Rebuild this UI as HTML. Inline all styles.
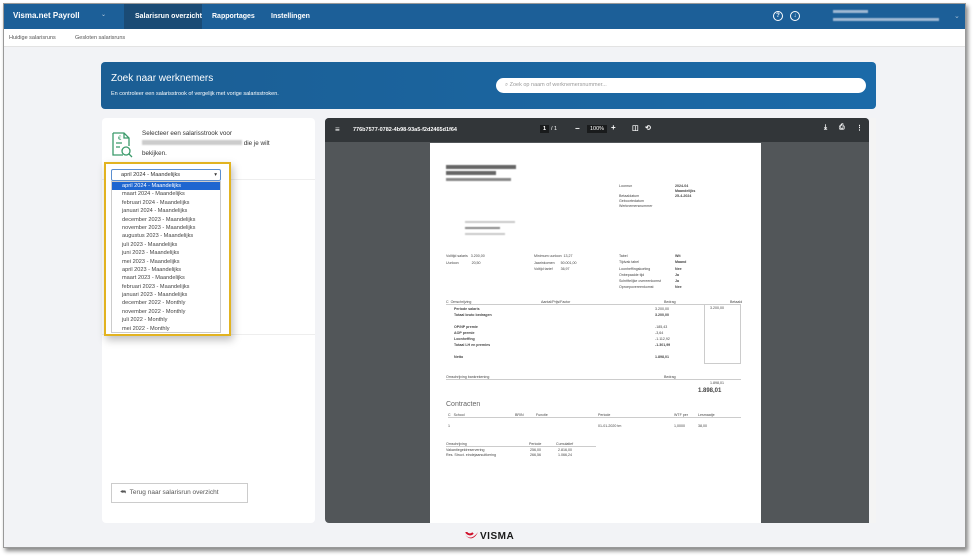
<!DOCTYPE html>
<html><head><meta charset="utf-8"><style>
*{box-sizing:border-box;margin:0;padding:0}
body{width:976px;height:556px;background:#fff;font-family:"Liberation Sans",sans-serif;position:relative;overflow:hidden}
.frame{position:absolute;left:3px;top:3px;width:963px;height:545px;background:#f2f3f6;border:1px solid #999;box-shadow:2px 3px 4px #888;overflow:hidden}
.nav{position:absolute;left:0;top:0;width:100%;height:25px;background:#1c5f98;color:#fff;font-size:7px;font-weight:bold}
.nav span{position:absolute;top:9px}
.sub{position:absolute;left:0;top:25px;width:100%;height:18px;background:#fff;font-size:5.5px;color:#555;border-bottom:1px solid #e3e3e3}
.abs{position:absolute}
.blur{background:#c9c9c9;height:4px;position:absolute;filter:blur(.6px)}
.dl div{height:8.4px;line-height:8.4px;padding-left:10px;font-size:5.6px;color:#444;white-space:nowrap}
.pt{position:absolute;font-size:3.6px;color:#444;white-space:nowrap}
</style></head><body>
<div class="frame">
 <div class="nav">
  <span style="left:9px;top:7px;font-size:8px">Visma.net Payroll</span>
  <span style="left:97px;top:7px;font-weight:normal;font-size:6px;opacity:.7">⌄</span>
  <div class="abs" style="left:120px;top:0;width:78px;height:25px;background:#1a4b75"></div>
  <span style="left:131px">Salarisrun overzicht</span>
  <span style="left:208px">Rapportages</span>
  <span style="left:267px">Instellingen</span>
  <div class="abs" style="left:769px;top:7px;width:10px;height:10px;border:1px solid #fff;border-radius:50%;font-size:6px;text-align:center;line-height:8px">?</div>
  <div class="abs" style="left:786px;top:7px;width:10px;height:10px;border:1px solid #fff;border-radius:50%;font-size:6px;text-align:center;line-height:8px">↓</div>
  <div class="blur" style="left:829px;top:6px;width:35px;height:3px;background:#9fb8d3"></div>
  <div class="blur" style="left:829px;top:14px;width:106px;height:3px;background:#9fb8d3"></div>
  <span style="left:950px;top:8px;font-weight:normal;opacity:.6">⌄</span>
 </div>
 <div class="sub"><span class="abs" style="left:5px;top:6px">Huidige salarisruns</span><span class="abs" style="left:71px;top:6px">Gesloten salarisruns</span></div>
 <div class="abs" style="left:97px;top:58px;width:775px;height:47px;background:linear-gradient(90deg,#1b5e94,#1b6aa8);border-radius:4px;color:#fff">
  <div class="abs" style="left:10px;top:11px;font-size:10px">Zoek naar werknemers</div>
  <div class="abs" style="left:10px;top:29px;font-size:5.5px">En controleer een salarisstrook of vergelijk met vorige salarisstroken.</div>
  <div class="abs" style="left:395px;top:16px;width:370px;height:15px;background:#fff;border-radius:8px;color:#999;font-size:5.5px;line-height:15px;padding-left:9px">⌕ Zoek op naam of werknemersnummer...</div>
 </div>
 <div class="abs" style="left:98px;top:114px;width:213px;height:405px;background:#fff;border-radius:4px">
  <svg class="abs" style="left:8px;top:13px" width="24" height="28" viewBox="0 0 24 28" fill="none" stroke="#3a9a6a" stroke-width="1.3"><path d="M3 2h11l5 5v8M3 2v22h10M14 2v5h5"/><circle cx="16" cy="20" r="4"/><path d="M19 23l3 3M6 12h6M6 16h4"/><text x="8" y="9" font-size="6" fill="#3a9a6a" stroke="none">€</text></svg>
  <div class="abs" style="left:40px;top:11px;font-size:6.3px;color:#333;line-height:10px;width:170px">Selecteer een salarisstrook voor<br><span style="display:inline-block;width:100px;height:5px;background:#ccc;filter:blur(.7px)"></span> die je wilt<br>bekijken.</div>
  <div class="abs" style="left:15px;top:77px;width:96px;height:12px;border:1px solid #bbb"></div>
  <div class="abs" style="left:15px;top:103px;width:111px;height:20px;border:1px solid #ccc;font-size:6.5px;line-height:18px;padding-left:86px;color:#444">risstrook</div>
  <div class="abs" style="left:15px;top:130px;width:101px;height:20px;border:1px solid #ccc;font-size:6.5px;line-height:18px;padding-left:80px;color:#444">nken</div>
  <div class="abs" style="left:15px;top:157px;width:71px;height:20px;border:1px solid #ccc"></div>
  <div class="abs" style="left:0;top:61px;width:213px;border-top:1px solid #eee"></div>
  <div class="abs" style="left:0;top:216px;width:213px;border-top:1px solid #eee"></div>
  <div class="abs" style="left:9px;top:365px;width:137px;height:20px;border:1px solid #ccc;font-size:6.5px;color:#555;line-height:18px;padding-left:8px">⮪ &nbsp;Terug naar salarisrun overzicht</div>
 </div>
 <div class="abs" style="left:100px;top:158px;width:127px;height:174px;border:2px solid #e2b320;background:#fff;box-shadow:2px 4px 8px rgba(0,0,0,.25)">
  <div class="abs" style="left:5px;top:5px;width:110px;height:12px;border:1px solid #5b8fd0;border-radius:2px;font-size:5.6px;line-height:10px;padding-left:9px;color:#333">april 2024 - Maandelijks<span class="abs" style="right:3px;top:0">▾</span></div>
  <div class="abs dl" style="left:5px;top:17px;width:110px;height:152px;border:1px solid #ccc;overflow:hidden">
   <div style="background:#1e66d0;color:#fff">april 2024 - Maandelijks</div><div>maart 2024 - Maandelijks</div><div>februari 2024 - Maandelijks</div><div>januari 2024 - Maandelijks</div><div>december 2023 - Maandelijks</div><div>november 2023 - Maandelijks</div><div>augustus 2023 - Maandelijks</div><div>juli 2023 - Maandelijks</div><div>juni 2023 - Maandelijks</div><div>mei 2023 - Maandelijks</div><div>april 2023 - Maandelijks</div><div>maart 2023 - Maandelijks</div><div>februari 2023 - Maandelijks</div><div>januari 2023 - Maandelijks</div><div>december 2022 - Monthly</div><div>november 2022 - Monthly</div><div>juli 2022 - Monthly</div><div>mei 2022 - Monthly</div>
  </div>
 </div>
 <div class="abs" style="left:321px;top:114px;width:544px;height:405px;background:#525659;border-radius:4px 4px 0 4px;overflow:hidden">
  <div class="abs" style="left:0;top:0;width:544px;height:24px;background:#323639;color:#fff;font-size:5.5px;font-weight:bold">
   <span class="abs" style="left:10px;top:7px;font-size:8px;font-weight:normal">≡</span>
   <span class="abs" style="left:28px;top:9px">776b7577-0782-4b98-93a5-f2d2465d1f64</span>
   <span class="abs" style="left:215px;top:7px;background:#191b1c;padding:1px 3px">1</span><span class="abs" style="left:226px;top:8px;font-weight:normal">/ 1</span>
   <span class="abs" style="left:250px;top:6px;font-size:8px">−</span>
   <span class="abs" style="left:262px;top:7px;background:#191b1c;padding:1px 3px;font-weight:normal">100%</span>
   <span class="abs" style="left:286px;top:5px;font-size:8px">+</span>
   <span class="abs" style="left:307px;top:6px;font-size:7px">◫</span><span class="abs" style="left:320px;top:6px;font-size:7px">⟲</span>
   <span class="abs" style="left:499px;top:6px;font-size:7px">⤓</span><span class="abs" style="left:514px;top:6px;font-size:7px">⎙</span><span class="abs" style="left:531px;top:6px;font-size:7px">⋮</span>
  </div>
  <div class="abs" style="left:105px;top:25px;width:331px;height:385px;background:#fff">
   <div class="blur" style="left:16px;top:22px;width:70px;background:#666"></div>
   <div class="blur" style="left:16px;top:28px;width:50px;background:#666"></div>
   <div class="blur" style="left:16px;top:35px;width:65px;height:3px;background:#888"></div>
   <div class="pt" style="left:189px;top:41px;line-height:5px">Loonrun<br><br>Betaaldatum<br>Geboortedatum<br>Werknemersnummer</div>
   <div class="pt" style="left:245px;top:41px;line-height:5px;font-weight:bold">2024-04<br>Maandelijks<br>25-4-2024</div>
   <div class="blur" style="left:35px;top:78px;width:50px;height:2px"></div><div class="blur" style="left:35px;top:84px;width:35px;height:2px;background:#888"></div><div class="blur" style="left:35px;top:90px;width:40px;height:2px"></div>
   <div class="pt" style="left:16px;top:110px;line-height:6.5px">Volltijd salaris &nbsp;&nbsp;3.200,00<br>Uurloon &nbsp;&nbsp;&nbsp;&nbsp;&nbsp;&nbsp;&nbsp;&nbsp;&nbsp;&nbsp;&nbsp;&nbsp;20,50</div>
   <div class="pt" style="left:104px;top:110px;line-height:6.5px">Minimum uurloon &nbsp;13,27<br>Jaarinkomen &nbsp;&nbsp;&nbsp;&nbsp;&nbsp;50.001,00<br>Voltijd tarief &nbsp;&nbsp;&nbsp;&nbsp;&nbsp;&nbsp;&nbsp;36,97</div>
   <div class="pt" style="left:189px;top:110px;line-height:6.3px">Tabel<br>Tijdvak tabel<br>Loonheffingskorting<br>Onbepaalde tijd<br>Schriftelijke overeenkomst<br>Oproepovereenkomst</div>
   <div class="pt" style="left:245px;top:110px;line-height:6.3px;font-weight:bold">Wit<br>Maand<br>Nee<br>Ja<br>Ja<br>Nee</div>
   <div class="pt" style="left:16px;top:157px;width:295px;border-bottom:1px solid #ccc">C &nbsp;Omschrijving<span class="abs" style="left:95px">Aantal/Prijs/Factor</span><span class="abs" style="left:218px">Bedrag</span><span class="abs" style="left:284px">Betaald</span></div>
   <div class="pt" style="left:24px;top:163px;line-height:6px;font-weight:bold;width:215px">Periode salaris<br>Totaal bruto bedragen<br><br>OP/NP premie<br>AOP premie<br>Loonheffing<br>Totaal LH en premies<br><br>Netto</div>
   <div class="pt" style="left:225px;top:163px;line-height:6px">3.200,00<br><b>3.200,00</b><br><br>-185,43<br>-3,64<br>-1.112,92<br><b>-1.301,99</b><br><br><b>1.898,01</b></div>
   <div class="pt" style="left:280px;top:163px">3.200,00</div>
   <div class="abs" style="left:274px;top:161px;width:37px;height:60px;border:1px solid #ccc"></div>
   <div class="pt" style="left:16px;top:232px;width:295px;border-bottom:1px solid #ccc">Omschrijving bankrekening<span class="abs" style="left:218px">Bedrag</span></div>
   <div class="pt" style="left:280px;top:238px">1.898,01</div>
   <div class="pt" style="left:268px;top:245px;font-size:6px;font-weight:bold">1.898,01</div>
   <div class="pt" style="left:16px;top:258px;font-size:7px;color:#666">Contracten</div>
   <div class="pt" style="left:18px;top:270px;width:293px;border-bottom:1px solid #ccc">C &nbsp;&nbsp;School<span class="abs" style="left:67px">BRIN</span><span class="abs" style="left:88px">Functie</span><span class="abs" style="left:150px">Periode</span><span class="abs" style="left:226px">WTF per</span><span class="abs" style="left:250px">Lesmaatje</span></div>
   <div class="pt" style="left:18px;top:281px">1<span class="abs" style="left:150px">01-01-2020 tm</span><span class="abs" style="left:226px">1,0000</span><span class="abs" style="left:250px">38,00</span></div>
   <div class="pt" style="left:16px;top:299px;width:150px;border-bottom:1px solid #ccc">Omschrijving<span class="abs" style="left:83px">Periode</span><span class="abs" style="left:110px">Cumulatief</span></div>
   <div class="pt" style="left:16px;top:305px;line-height:5px">Vakantiegeldreservering<br>Res. Struct. eindejaarsuitkering</div>
   <div class="pt" style="left:100px;top:305px;line-height:5px">256,00<br>266,56</div><div class="pt" style="left:128px;top:305px;line-height:5px">2.816,00<br>1.066,24</div>
  </div>
 </div>
 <div class="abs" style="left:866px;top:114px;width:6px;height:405px;background:#f4f4f4"></div>
 <svg class="abs" style="left:461px;top:528px" width="14" height="9" viewBox="0 0 14 9"><path d="M0 2c3 5 8 5 13-2c-3 7-9 9-13 2z" fill="#d0112b"/><path d="M1 0c2 3 5 3 7 1" stroke="#d0112b" stroke-width="2" fill="none"/></svg>
 <div class="abs" style="left:476px;top:527px;font-size:10px;font-weight:bold;color:#1a1a1a;letter-spacing:.5px">VISMA</div>
</div>
</body></html>
